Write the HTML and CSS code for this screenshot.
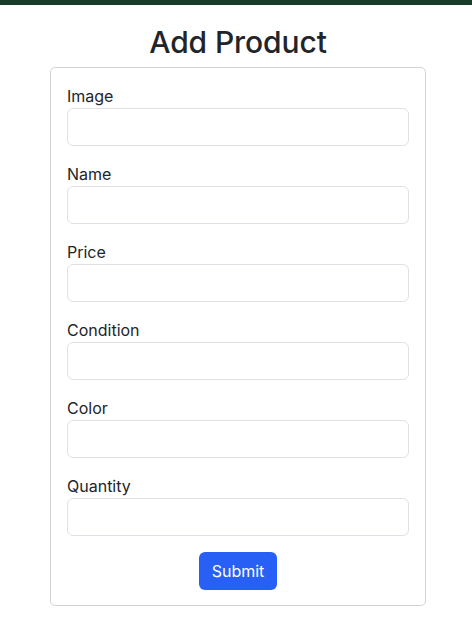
FILE: index.html
```html
<!DOCTYPE html>
<html>
<head>
<meta charset="utf-8">
<link rel="stylesheet" href="styles.css">
</head>
<body>
<div class="topbar"></div>
<main class="page">
  <h1 class="title">Add Product</h1>
  <form class="card">
    <div class="field"><label class="label">Image</label><input class="input" type="text"></div>
    <div class="field"><label class="label">Name</label><input class="input" type="text"></div>
    <div class="field"><label class="label">Price</label><input class="input" type="text"></div>
    <div class="field"><label class="label">Condition</label><input class="input" type="text"></div>
    <div class="field"><label class="label">Color</label><input class="input" type="text"></div>
    <div class="field"><label class="label">Quantity</label><input class="input" type="text"></div>
    <div class="actions"><button class="btn" type="button">Submit</button></div>
  </form>
</main>
</body>
</html>
```
FILE: styles.css
```css
* { box-sizing: border-box; }
html, body { margin: 0; padding: 0; background: #fff; }
body {
  font-family: Inter, "Noto Sans", "Liberation Sans", sans-serif;
  color: #212529;
  font-size: 16px;
  line-height: 1.5;
}
.topbar { height: 5px; background: #1a3d2b; }
.page { display: flex; flex-direction: column; align-items: center; padding-left: 4px; }
.title {
  margin: 18px 0 6px;
  font-size: 30px;
  font-weight: 500;
  line-height: 38px;
  letter-spacing: -0.1px;
}
.card {
  width: 376px;
  border: 1px solid #d3d3d3;
  border-radius: 5px;
  padding: 16px 16px 15px;
  display: flex;
  flex-direction: column;
  gap: 16px;
}
.field { display: flex; flex-direction: column; }
.label { font-size: 16px; line-height: 24px; height: 24px; }
.input {
  height: 38px;
  border: 1px solid #dee2e6;
  border-radius: 6px;
  background: #fff;
  font: inherit;
  padding: 6px 12px;
  outline: none;
}
.actions { display: flex; justify-content: center; }
.btn {
  width: 78px;
  height: 38px;
  border: none;
  border-radius: 6px;
  background: #285ff4;
  color: #fff;
  font-family: inherit;
  font-size: 16px;
  cursor: pointer;
}
```
